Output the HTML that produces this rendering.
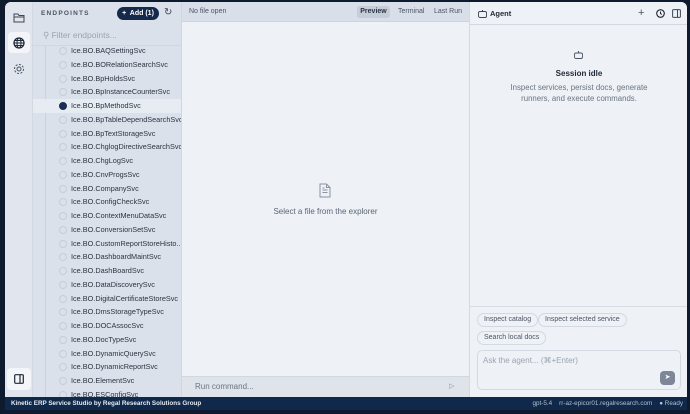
<!DOCTYPE html><html><head><style>
*{box-sizing:border-box;margin:0;padding:0}
body{width:690px;height:414px;background:#0e1b2e;font-family:"Liberation Sans",sans-serif;position:relative;overflow:hidden}
.app{position:absolute;left:5px;top:2px;width:682px;height:395px;background:#eef1f6;border-radius:6px 6px 0 0;overflow:hidden}
.rail{position:absolute;left:0;top:0;width:28px;height:395px;background:#e1e6ee;border-right:1px solid #d3d9e2}
.exp{position:absolute;left:28px;top:0;width:149px;height:395px;background:#dbe1ea;border-right:1px solid #cfd6e0;overflow:hidden}
.center{position:absolute;left:177px;top:0;width:287px;height:395px;background:#eef1f6}
.right{position:absolute;left:464px;top:0;width:218px;height:395px;background:#eef1f5;border-left:1px solid #d3d9e2}
.row{position:absolute;left:26px;height:13.75px;font-size:7.3px;color:#2a3442;line-height:13.75px;width:123px;padding-left:30px;white-space:nowrap}
.row i{position:absolute;left:4px;top:3px;width:8px;height:8px;border:1px solid #c6cdd8;border-radius:50%}
.sel{background:#e7ecf2}
.sel i{background:#1b2f55;border-color:#1b2f55}
.chip{position:absolute;height:14px;border:1px solid #d3d9e2;border-radius:7px;font-size:7px;color:#4a5566;line-height:12px;padding:0 6px;background:#eef1f5;white-space:nowrap}
</style></head><body>
<div class="app">
<div class="rail">
<svg style="position:absolute;left:8px;top:10px" width="12" height="11" viewBox="0 0 12 11"><path d="M1 2h4l1 1.5h5v6.5H1z M1 5h10" fill="none" stroke="#3b4656" stroke-width="1"/></svg>
<div style="position:absolute;left:3px;top:30px;width:22px;height:21px;background:#f3f5f8;border-radius:4px"></div>
<svg style="position:absolute;left:8px;top:35px" width="12" height="12" viewBox="0 0 12 12"><circle cx="6" cy="6" r="5" fill="none" stroke="#1e2836" stroke-width="1.3"/><ellipse cx="6" cy="6" rx="2" ry="5" fill="none" stroke="#1e2836" stroke-width="1"/><path d="M1 6h10M2 3.5h8M2 8.5h8" stroke="#1e2836" stroke-width=".9"/></svg>
<svg style="position:absolute;left:8px;top:61px" width="12" height="12" viewBox="0 0 12 12"><circle cx="6" cy="6" r="2" fill="none" stroke="#4a5566"/><circle cx="6" cy="6" r="4.5" fill="none" stroke="#4a5566" stroke-dasharray="2 1.5"/></svg>
<div style="position:absolute;left:2px;top:366px;width:24px;height:22px;background:#f3f5f8;border-radius:4px"></div>
<svg style="position:absolute;left:9px;top:372px" width="10" height="10" viewBox="0 0 10 10"><rect x=".7" y=".7" width="8.6" height="8.6" rx="1" fill="none" stroke="#1e2836" stroke-width="1.2"/><path d="M6 1v8" stroke="#1e2836" stroke-width="1.2"/></svg>
</div>
<div class="exp">
<div style="position:absolute;left:8px;top:8px;font-size:6.5px;font-weight:bold;letter-spacing:1.2px;color:#4a5566">ENDPOINTS</div>
<div style="position:absolute;left:84px;top:5px;width:42px;height:13px;background:#15294a;border-radius:7px;color:#fff;font-size:7px;font-weight:bold;line-height:13px;text-align:center">+&nbsp; Add (1)</div>
<div style="position:absolute;left:131px;top:5px;font-size:10px;color:#3b4656">↻</div>
<div style="position:absolute;left:0;top:22px;width:149px;height:22px;border-bottom:1px solid #d0d7e0"></div>
<div style="position:absolute;left:10px;top:28px;font-size:8.5px;color:#9aa4b2">⚲ Filter endpoints...</div>
<div style="position:absolute;left:12px;top:44px;width:1px;height:351px;background:#cbd2dc"></div>
<div id="rows"></div>
</div>
<div class="center">
<div style="position:absolute;left:0;top:0;width:287px;height:20px;background:#d9dfe8;border-bottom:1px solid #cdd4de"></div>
<div style="position:absolute;left:7px;top:6px;font-size:7px;color:#4a5566">No file open</div>
<div style="position:absolute;left:175px;top:4px;width:33px;height:12px;background:#c6cdd8;border-radius:3px;font-size:7px;font-weight:bold;color:#2a3442;text-align:center;line-height:12px">Preview</div>
<div style="position:absolute;left:216px;top:6px;font-size:7px;color:#4a5566">Terminal</div>
<div style="position:absolute;left:252px;top:6px;font-size:7px;color:#4a5566">Last Run</div>
<svg style="position:absolute;left:137px;top:181px" width="12" height="15" viewBox="0 0 12 15"><path d="M1 1h6.5l3.5 3.5V14H1z M7.5 1v3.5H11 M3.5 7h5M3.5 9.5h5M3.5 5h2" fill="none" stroke="#8a94a3" stroke-width="1"/></svg>
<div style="position:absolute;left:0;width:287px;top:205px;text-align:center;font-size:8px;color:#5a6576">Select a file from the explorer</div>
<div style="position:absolute;left:0;top:374px;width:287px;height:21px;background:#dfe4eb;border-top:1px solid #d0d7e0"></div>
<div style="position:absolute;left:13px;top:380px;font-size:8px;color:#6a7484">Run command...</div>
<div style="position:absolute;left:267px;top:380px;font-size:7px;color:#8a94a3">▷</div>
</div>
<div class="right">
<div style="position:absolute;left:0;top:0;width:218px;height:23px;border-bottom:1px solid #d3d9e2"></div>
<svg style="position:absolute;left:8px;top:8px" width="9" height="8" viewBox="0 0 9 8"><rect x=".5" y="1.5" width="8" height="6" rx="1.5" fill="none" stroke="#3b4656" stroke-width=".9"/><path d="M4.5 0v1.5" stroke="#3b4656"/></svg>
<div style="position:absolute;left:20px;top:7px;font-size:7.5px;font-weight:bold;color:#1e2836">Agent</div>
<div style="position:absolute;left:168px;top:6px;font-size:11px;line-height:10px;color:#4a5566">+</div>
<svg style="position:absolute;left:186px;top:7px" width="9" height="9" viewBox="0 0 9 9"><circle cx="4.5" cy="4.5" r="3.8" fill="none" stroke="#1e2836" stroke-width="1.1"/><path d="M4.5 2.5v2l1.3 1" stroke="#1e2836" fill="none"/></svg>
<svg style="position:absolute;left:202px;top:7px" width="9" height="9" viewBox="0 0 9 9"><rect x=".6" y=".6" width="7.8" height="7.8" rx="1" fill="none" stroke="#3b4656" stroke-width="1"/><path d="M5.5 1v7" stroke="#3b4656"/></svg>
<svg style="position:absolute;left:104px;top:49px" width="9" height="8" viewBox="0 0 9 8"><rect x=".5" y="2" width="8" height="5.5" rx="1.5" fill="none" stroke="#4a5566" stroke-width=".9"/><path d="M4.5 0v2" stroke="#4a5566"/></svg>
<div style="position:absolute;left:0;width:218px;top:67px;text-align:center;font-size:8px;font-weight:bold;color:#1e2836">Session idle</div>
<div style="position:absolute;left:0;width:218px;top:80px;text-align:center;font-size:7.8px;color:#6a7484;line-height:11px">Inspect services, persist docs, generate<br>runners, and execute commands.</div>
<div style="position:absolute;left:0;top:304px;width:218px;height:1px;background:#d8dde5"></div>
<div class="chip" style="left:7px;top:311px">Inspect catalog</div>
<div class="chip" style="left:68px;top:311px">Inspect selected service</div>
<div class="chip" style="left:7px;top:329px">Search local docs</div>
<div style="position:absolute;left:7px;top:348px;width:204px;height:40px;border:1px solid #d3d9e2;border-radius:5px;background:#eef1f5"></div>
<div style="position:absolute;left:13px;top:354px;font-size:8px;color:#9aa4b2">Ask the agent... (⌘+Enter)</div>
<div style="position:absolute;left:190px;top:369px;width:15px;height:14px;background:#7d8797;border-radius:4px;color:#fff;font-size:7px;text-align:center;line-height:14px">➤</div>
</div>
</div>
<div style="position:absolute;left:5px;top:397px;width:682px;height:13px;background:#10284a;color:#e6ebf2;font-size:6.3px;line-height:13px">
<span style="position:absolute;left:6px;font-weight:bold">Kinetic ERP Service Studio by Regal Research Solutions Group</span>
<span style="position:absolute;right:4px;color:#b5c0cf">gpt-5.4 &nbsp;&nbsp; rr-az-epicor01.regalresearch.com &nbsp;&nbsp; ● Ready</span>
</div>
<script>
var n=["BAQSettingSvc","BORelationSearchSvc","BpHoldsSvc","BpInstanceCounterSvc","BpMethodSvc","BpTableDependSearchSvc","BpTextStorageSvc","ChglogDirectiveSearchSvc","ChgLogSvc","CnvProgsSvc","CompanySvc","ConfigCheckSvc","ContextMenuDataSvc","ConversionSetSvc","CustomReportStoreHisto...","DashboardMaintSvc","DashBoardSvc","DataDiscoverySvc","DigitalCertificateStoreSvc","DmsStorageTypeSvc","DOCAssocSvc","DocTypeSvc","DynamicQuerySvc","DynamicReportSvc","ElementSvc","ESConfigSvc"];
var h="";n.forEach(function(s,i){h+='<div class="row'+(i==4?' sel':'')+'" style="top:'+(42+i*13.75)+'px;left:0;padding-left:38px;width:149px"><i style="left:26px"></i>Ice.BO.'+s+'</div>'});
document.getElementById("rows").innerHTML=h;
</script>
</body></html>
